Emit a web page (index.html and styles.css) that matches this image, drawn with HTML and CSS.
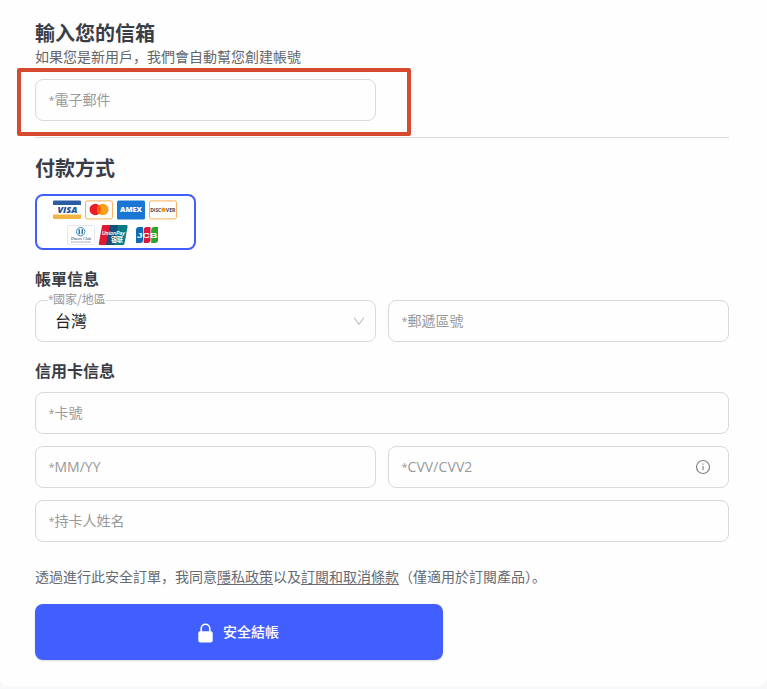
FILE: index.html
```html
<!DOCTYPE html>
<html lang="zh-Hans">
<head>
<meta charset="utf-8">
<title>安全結帳</title>
<link rel="stylesheet" href="styles.css">
</head>
<body>
<main class="checkout">
  <section class="email">
    <h1>輸入您的信箱</h1>
    <p class="hint">如果您是新用戶，我們會自動幫您創建帳號</p>
    <div class="field half"><span class="star">*</span>電子郵件</div>
    <div class="highlight"></div>
  </section>

  <section class="payment">
    <h1>付款方式</h1>
    <div class="methods">
      <div class="brands">
        <svg width="28" height="20" viewBox="0 0 28 20"><rect x=".3" y=".5" width="27.4" height="18.7" rx="1" fill="#fff"/><path d="M0 5V1.5Q0 .5 1 .5H27Q28 .5 28 1.5V5Z" fill="#2b5ba3"/><path d="M0 14.5H28V18Q28 19 27 19H1Q0 19 0 18Z" fill="#f2b440"/><text class="visa" x="4.5" y="12.9" textLength="20" lengthAdjust="spacingAndGlyphs">VISA</text></svg>
        <svg width="28" height="20" viewBox="0 0 28 20"><rect x=".6" y=".9" width="26.8" height="18" rx="1.5" fill="#fff" stroke="#f5ad55"/><circle cx="10.3" cy="9.5" r="5.8" fill="#eb1c26"/><circle cx="17.7" cy="9.5" r="5.8" fill="#f79e1b"/><path d="M14 5.1a5.8 5.8 0 0 1 0 8.8a5.8 5.8 0 0 1 0-8.8Z" fill="#ff5f00"/></svg>
        <svg width="28" height="20" viewBox="0 0 28 20"><rect y=".4" width="28" height="19" rx="1.5" fill="#1976d2"/><text class="amex" x="3" y="12.2" textLength="22" lengthAdjust="spacingAndGlyphs">AMEX</text></svg>
        <svg width="28" height="20" viewBox="0 0 28 20"><rect x=".6" y=".9" width="26.8" height="18" rx="1.5" fill="#fff" stroke="#f5ad55"/><text class="discover" x="1.2" y="11.9" textLength="11" lengthAdjust="spacingAndGlyphs">DISC</text><circle cx="14.4" cy="9.8" r="2.2" fill="#f49a20"/><text class="discover" x="16.8" y="11.9" textLength="9.7" lengthAdjust="spacingAndGlyphs">VER</text></svg>
      </div>
      <div class="brands second">
        <svg width="28" height="20" viewBox="0 0 28 20"><rect x=".5" y=".5" width="27" height="19" rx="1" fill="#fff" stroke="#e3e6ec"/><circle cx="13.7" cy="6.7" r="4.2" fill="#fff" stroke="#4086b5"/><path d="M12.2 4.2v5M15.2 4.2v5" stroke="#237bad" stroke-width="1.5"/><text class="diners" x="4" y="15.3" textLength="20" lengthAdjust="spacingAndGlyphs">Diners Club</text><path d="M4 17h20" stroke="#8a93a8" stroke-width="1.2" stroke-dasharray="1 .4"/></svg>
        <svg width="31" height="20" viewBox="0 0 31 20"><path d="M5 0H13L9 20H2Q.4 20 .8 18.5L4 1Q4.2 0 5 0Z" fill="#df1930"/><path d="M12 0H21L17 20H8Z" fill="#164d7b"/><path d="M20 0H28.5Q30 0 29.6 1.5L26.5 18.5Q26.2 20 25 20H16Z" fill="#087b83"/><text class="union" x="4" y="9.6" textLength="23" lengthAdjust="spacingAndGlyphs">UnionPay</text><text class="unioncn" x="13" y="16.6" textLength="12" lengthAdjust="spacingAndGlyphs">银联</text></svg>
        <svg class="jcb" width="22" height="18" viewBox="0 0 22 18"><path d="M3 1H7V14Q7 17 4 17H0V4Q0 1 3 1Z" fill="#0d6cb6"/><path d="M10.7 1H14.5V14Q14.5 17 11.5 17H7.7V4Q7.7 1 10.7 1Z" fill="#dc1840"/><path d="M18.2 1H22V14Q22 17 19 17H15.2V4Q15.2 1 18.2 1Z" fill="#2da22c"/><text class="jcbtext" x=".8" y="12.1" textLength="20.5" lengthAdjust="spacingAndGlyphs">JCB</text></svg>
      </div>
    </div>
  </section>

  <section class="billing">
    <h2>帳單信息</h2>
    <div class="row">
      <div class="field select">
        <span class="legend"><span class="star">*</span>國家/地區</span>
        <span class="value">台灣</span>
        <svg width="12" height="10" viewBox="0 0 12 10"><path d="M1 1.5L6 8.3L11 1.5" fill="none" stroke="#bdbdbd" stroke-width="1.1"/></svg>
      </div>
      <div class="field"><span class="star">*</span>郵遞區號</div>
    </div>
  </section>

  <section class="card">
    <h2>信用卡信息</h2>
    <div class="fields">
      <div class="field"><span class="star">*</span>卡號</div>
      <div class="row">
        <div class="field"><span class="star">*</span><span class="latin">MM/YY</span></div>
        <div class="field"><span class="star">*</span><span class="latin cvv">CVV/CVV2</span>
          <svg class="info" width="16" height="16" viewBox="0 0 16 16"><circle cx="8" cy="8" r="6.5" fill="none" stroke="#858585" stroke-width="1.2"/><path d="M8 7v4.2M8 4.6v1.2" stroke="#858585" stroke-width="1.2"/></svg>
        </div>
      </div>
      <div class="field"><span class="star">*</span>持卡人姓名</div>
    </div>
  </section>

  <p class="terms">透過進行此安全訂單，我同意<a>隱私政策</a>以及<a>訂閱和取消條款</a>（僅適用於訂閱產品）。</p>
  <button class="submit">
    <svg width="15" height="20" viewBox="0 0 15 20"><path d="M3.2 9V5.6a4.3 4.3 0 0 1 8.6 0V9" fill="none" stroke="#fff" stroke-width="1.6"/><rect x=".3" y="8.3" width="14.4" height="11.2" rx="2" fill="#fff"/></svg>
    <span>安全結帳</span>
  </button>
</main>
</body>
</html>
```
FILE: styles.css
```css
* { box-sizing: border-box; }

body {
  margin: 0;
  height: 689px;
  overflow: hidden;
  background: #f7f8fa;
  color: #3a3d45;
  font-family: "Noto Sans CJK SC", sans-serif;
  font-size: 14px;
}

.checkout {
  height: 686px;
  padding: 21px 38px 0 35px;
  background: #fefefe;
  border-radius: 0 0 8px 8px;
}

h1, h2, p { margin: 0; }
h1 { font-size: 20px; line-height: 24px; font-weight: 700; }
h2 { font-size: 16px; line-height: 20px; font-weight: 700; }

.email {
  position: relative;
  height: 117px;
  border-bottom: 1px solid #dcdcdc;
}
.hint { height: 34px; line-height: 22px; color: #666; }
.highlight {
  position: absolute;
  left: -18px;
  top: 47px;
  width: 394px;
  height: 68px;
  border: 4px solid #d64a2f;
  border-radius: 2px;
}

.field {
  position: relative;
  display: flex;
  align-items: center;
  flex: 1 1 0;
  height: 42px;
  padding: 0 12.5px 2px;
  background: #fefefe;
  border: 1px solid #d9d9d9;
  border-radius: 8px;
  color: #999;
}
.half { width: 341px; }
.row { display: grid; grid-template-columns: 1fr 1fr; gap: 12px; }
.star { width: 6px; font-family: "Open Sans", sans-serif; font-size: 11px; }
.latin { font-family: "Open Sans", sans-serif; letter-spacing: 0; }
.cvv { letter-spacing: .1px; }
.info { margin: 2px 5px 0 auto; }

.payment { padding-top: 18px; }
.methods {
  width: 161px;
  height: 56px;
  margin-top: 14px;
  padding-top: 4px;
  border: 2px solid #415fff;
  border-radius: 8px;
  background: #fff;
}
.brands { display: flex; gap: 4px; height: 20px; margin-left: 16px; }
.second { margin: 5px 0 0 30px; }
.second svg + svg { margin-left: -1px; }
.second .jcb { margin: 1px 0 0 3px; }

.visa { font: italic 800 8px "Open Sans", sans-serif; fill: #1e5297; }
.amex { font: 800 7px "Open Sans", sans-serif; fill: #fff; }
.discover { font: 700 5.8px "Open Sans", sans-serif; fill: #44434a; }
.diners { font: 4.5px "Liberation Serif", serif; fill: #26354e; }
.union { font: italic 700 6px "Liberation Sans", sans-serif; fill: #fff; }
.unioncn { font: 700 6.5px "Noto Sans CJK SC", sans-serif; fill: #fff; }
.jcbtext { font: 700 8px "Liberation Sans", sans-serif; fill: #fff; }

.billing { padding-top: 18px; }
.billing .row { margin-top: 12px; }
.select { padding: 0 10px 2px 19px; justify-content: space-between; }
.select svg { margin-top: 2px; }
.legend {
  position: absolute;
  left: 12px;
  top: -10px;
  display: flex;
  height: 16px;
  background: #fefefe;
  font-size: 12px;
  line-height: 16px;
}
.legend .star { width: 5px; font-size: 10px; }
.value { color: #222; font-size: 16px; }

.card { padding-top: 18px; }
.fields { display: flex; flex-direction: column; gap: 12px; margin-top: 12px; }
.fields > .field { flex: none; }

.terms { margin-top: 24px; line-height: 20px; color: #666a73; }
.terms a { text-decoration: underline; text-underline-offset: 2px; }

.submit {
  display: flex;
  align-items: center;
  justify-content: center;
  gap: 10px;
  width: 408px;
  height: 56px;
  margin-top: 18px;
  padding: 0 1px 2px 0;
  border: 0;
  border-radius: 8px;
  background: #415fff;
  box-shadow: 0 1px 2px #0002;
  color: #fff;
  font: 500 14px "Noto Sans CJK SC", sans-serif;
}
.submit svg { margin-top: 4px; }
```
